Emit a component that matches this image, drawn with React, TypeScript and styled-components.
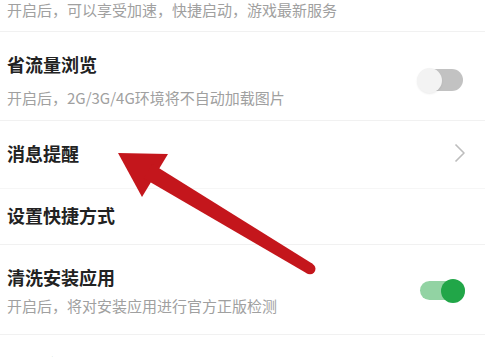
import React from 'react'
import styled, { createGlobalStyle } from 'styled-components'

const GlobalStyle = createGlobalStyle`
  body {
    margin: 0;
    background: #ffffff;
    font-family: "Noto Sans CJK SC", "Noto Sans", sans-serif;
  }
`

type RowSpec = {
  title?: string
  subtitle?: string
  control?: 'on' | 'off' | 'chevron'
  top: number
  bottom: number
  gap?: number
  divider?: string
}

const rows: RowSpec[] = [
  { subtitle: '开启后，可以享受加速，快捷启动，游戏最新服务', top: 0, bottom: 11 },
  { title: '省流量浏览', subtitle: '开启后，2G/3G/4G环境将不自动加载图片', control: 'off', top: 20, bottom: 12, gap: 12 },
  { title: '消息提醒', control: 'chevron', top: 20, bottom: 23, divider: '#f6f6f6' },
  { title: '设置快捷方式', top: 14, bottom: 17 },
  { title: '清洗安装应用', subtitle: '开启后，将对安装应用进行官方正版检测', control: 'on', top: 20, bottom: 18, gap: 7 },
  { title: '下载完成自动安装', top: 18, bottom: 20 },
]

const Chevron = () => (
  <ChevronBox width="12" height="20" viewBox="0 0 12 20">
    <polyline points="1.5,1.5 10,10 1.5,18.5" fill="none" stroke="#bdbdbd" strokeWidth="1.6" strokeLinejoin="round" />
  </ChevronBox>
)

const Arrow = () => (
  <ArrowLayer width="485" height="357" viewBox="0 0 485 357">
    <polygon points="118,153 168,154 142,197" fill="#c4161c" />
    <polygon points="143.6,178.3 152.4,163.9 312.9,264.1 307.1,273.5" fill="#c4161c" />
    <circle cx="310" cy="268.8" r="5.5" fill="#c4161c" />
  </ArrowLayer>
)

const App = () => {
  return (
    <Page>
      <GlobalStyle />
      {rows.map((row, i) => (
        <Row key={i} $top={row.top} $bottom={row.bottom} $divider={row.divider}>
          <TextBlock>
            {row.title && <Title>{row.title}</Title>}
            {row.subtitle && <Subtitle $gap={row.title ? row.gap ?? 0 : 0}>{row.subtitle}</Subtitle>}
          </TextBlock>
          {row.control === 'chevron' && <Chevron />}
          {(row.control === 'on' || row.control === 'off') && (
            <Track $on={row.control === 'on'}>
              <Knob $on={row.control === 'on'} />
            </Track>
          )}
        </Row>
      ))}
      <Arrow />
    </Page>
  )
}

const Page = styled.div`
  position: relative;
  width: 485px;
  height: 357px;
  overflow: hidden;
  background: #ffffff;
`

const Row = styled.div<{ $top: number; $bottom: number; $divider?: string }>`
  display: flex;
  align-items: center;
  justify-content: space-between;
  padding: ${p => p.$top}px 21px ${p => p.$bottom}px 7px;
  border-bottom: 1px solid ${p => p.$divider ?? '#f1f1f1'};
`

const TextBlock = styled.div`
  display: flex;
  flex-direction: column;
`

const Title = styled.div`
  font-size: 18px;
  line-height: 24px;
  font-weight: 700;
  color: #222222;
  white-space: nowrap;
`

const Subtitle = styled.div<{ $gap: number }>`
  margin-top: ${p => p.$gap}px;
  font-size: 15px;
  line-height: 20px;
  color: #a0a0a0;
  white-space: nowrap;
`

const Track = styled.div<{ $on: boolean }>`
  position: relative;
  display: flex;
  align-items: center;
  justify-content: ${p => (p.$on ? 'flex-end' : 'flex-start')};
  width: 45px;
  height: ${p => (p.$on ? 19 : 22)}px;
  border-radius: 11px;
  background: ${p => (p.$on ? '#92d3a3' : '#c2c2c2')};
  margin-right: ${p => (p.$on ? -1 : 1)}px;
`

const Knob = styled.div<{ $on: boolean }>`
  width: ${p => (p.$on ? 24 : 25)}px;
  height: ${p => (p.$on ? 24 : 25)}px;
  border-radius: 50%;
  background: ${p => (p.$on ? '#21a648' : '#f3f3f3')};
  box-shadow: ${p => (p.$on ? 'none' : '0 1px 2px rgba(0, 0, 0, 0.08)')};
  margin-left: ${p => (p.$on ? 0 : -1)}px;
`

const ChevronBox = styled.svg`
  display: block;
  margin-right: -2px;
`

const ArrowLayer = styled.svg`
  position: absolute;
  left: 0;
  top: 0;
  pointer-events: none;
`

export default App
